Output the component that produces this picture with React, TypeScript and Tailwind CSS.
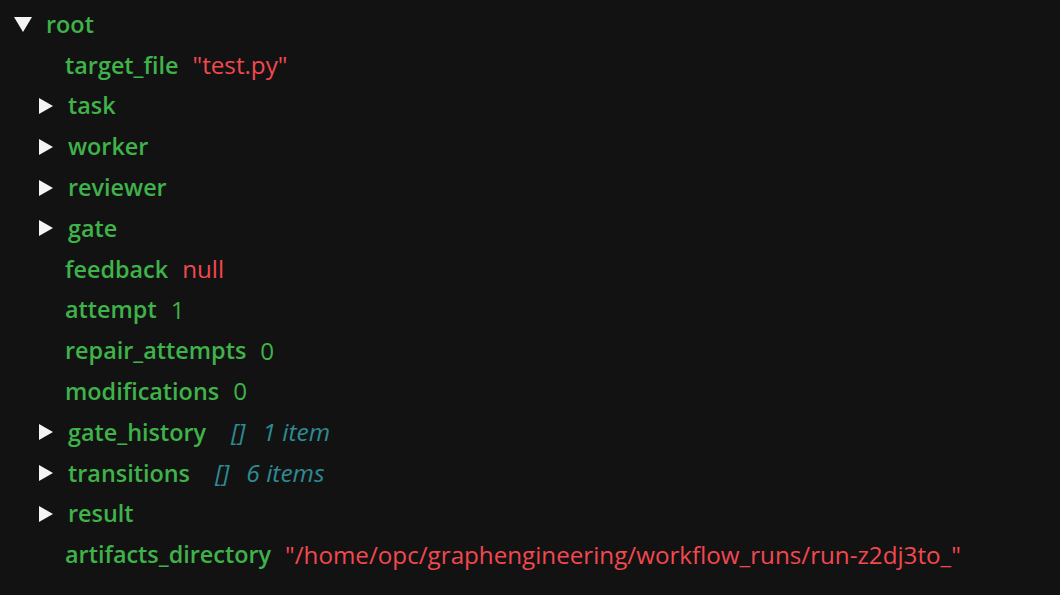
import React from "react";

type Node = {
  key: string;
  value?: string;
  kind?: "string" | "null" | "number";
  collapsed?: boolean;
  meta?: string;
};

const children: Node[] = [
  { key: "target_file", value: "\"test.py\"", kind: "string" },
  { key: "task", collapsed: true },
  { key: "worker", collapsed: true },
  { key: "reviewer", collapsed: true },
  { key: "gate", collapsed: true },
  { key: "feedback", value: "null", kind: "null" },
  { key: "attempt", value: "1", kind: "number" },
  { key: "repair_attempts", value: "0", kind: "number" },
  { key: "modifications", value: "0", kind: "number" },
  { key: "gate_history", collapsed: true, meta: "1 item" },
  { key: "transitions", collapsed: true, meta: "6 items" },
  { key: "result", collapsed: true },
  {
    key: "artifacts_directory",
    value: "\"/home/opc/graphengineering/workflow_runs/run-z2dj3to_\"",
    kind: "string",
  },
];

function Arrow({ open }: { open?: boolean }) {
  return open ? (
    <svg viewBox="0 0 18 16" className="w-[18px] h-[16px] shrink-0">
      <path d="M0 1h18L9 16z" fill="#f4f4f4" />
    </svg>
  ) : (
    <svg viewBox="0 0 16 16" className="w-[16px] h-[16px] shrink-0">
      <path d="M1 0l14 8-14 8z" fill="#f4f4f4" />
    </svg>
  );
}

function Row({ node }: { node: Node }) {
  const valueColor =
    node.kind === "number" ? "text-[#3fb24a]" : "text-[#f2484f]";

  return (
    <div className="flex items-center h-[40.8px]">
      {node.collapsed ? (
        <div className="flex items-center pl-[38px]">
          <Arrow />
          <span className="ml-[14px] font-semibold text-[#3fb24a]">
            {node.key}
          </span>
        </div>
      ) : (
        <span className="pl-[65px] font-semibold text-[#3fb24a]">
          {node.key}
        </span>
      )}
      {node.value && (
        <span className={`ml-[14px] text-[24.2px] ${valueColor}`}>
          {node.value}
        </span>
      )}
      {node.meta && (
        <span className="ml-[25px] italic text-[24.5px] text-[#2d8b93]">
          []<span className="ml-[17px]">{node.meta}</span>
        </span>
      )}
    </div>
  );
}

export default function App() {
  return (
    <div
      className="w-[1060px] h-[595px] bg-[#121212] text-[23.4px] pt-[4px] overflow-hidden"
      style={{ fontFamily: '"Open Sans", "Noto Sans", sans-serif' }}
    >
      <div className="flex items-center h-[40.8px] pl-[14px]">
        <Arrow open />
        <span className="ml-[14px] font-semibold text-[#3fb24a]">root</span>
      </div>
      {children.map((node) => (
        <Row key={node.key} node={node} />
      ))}
    </div>
  );
}
